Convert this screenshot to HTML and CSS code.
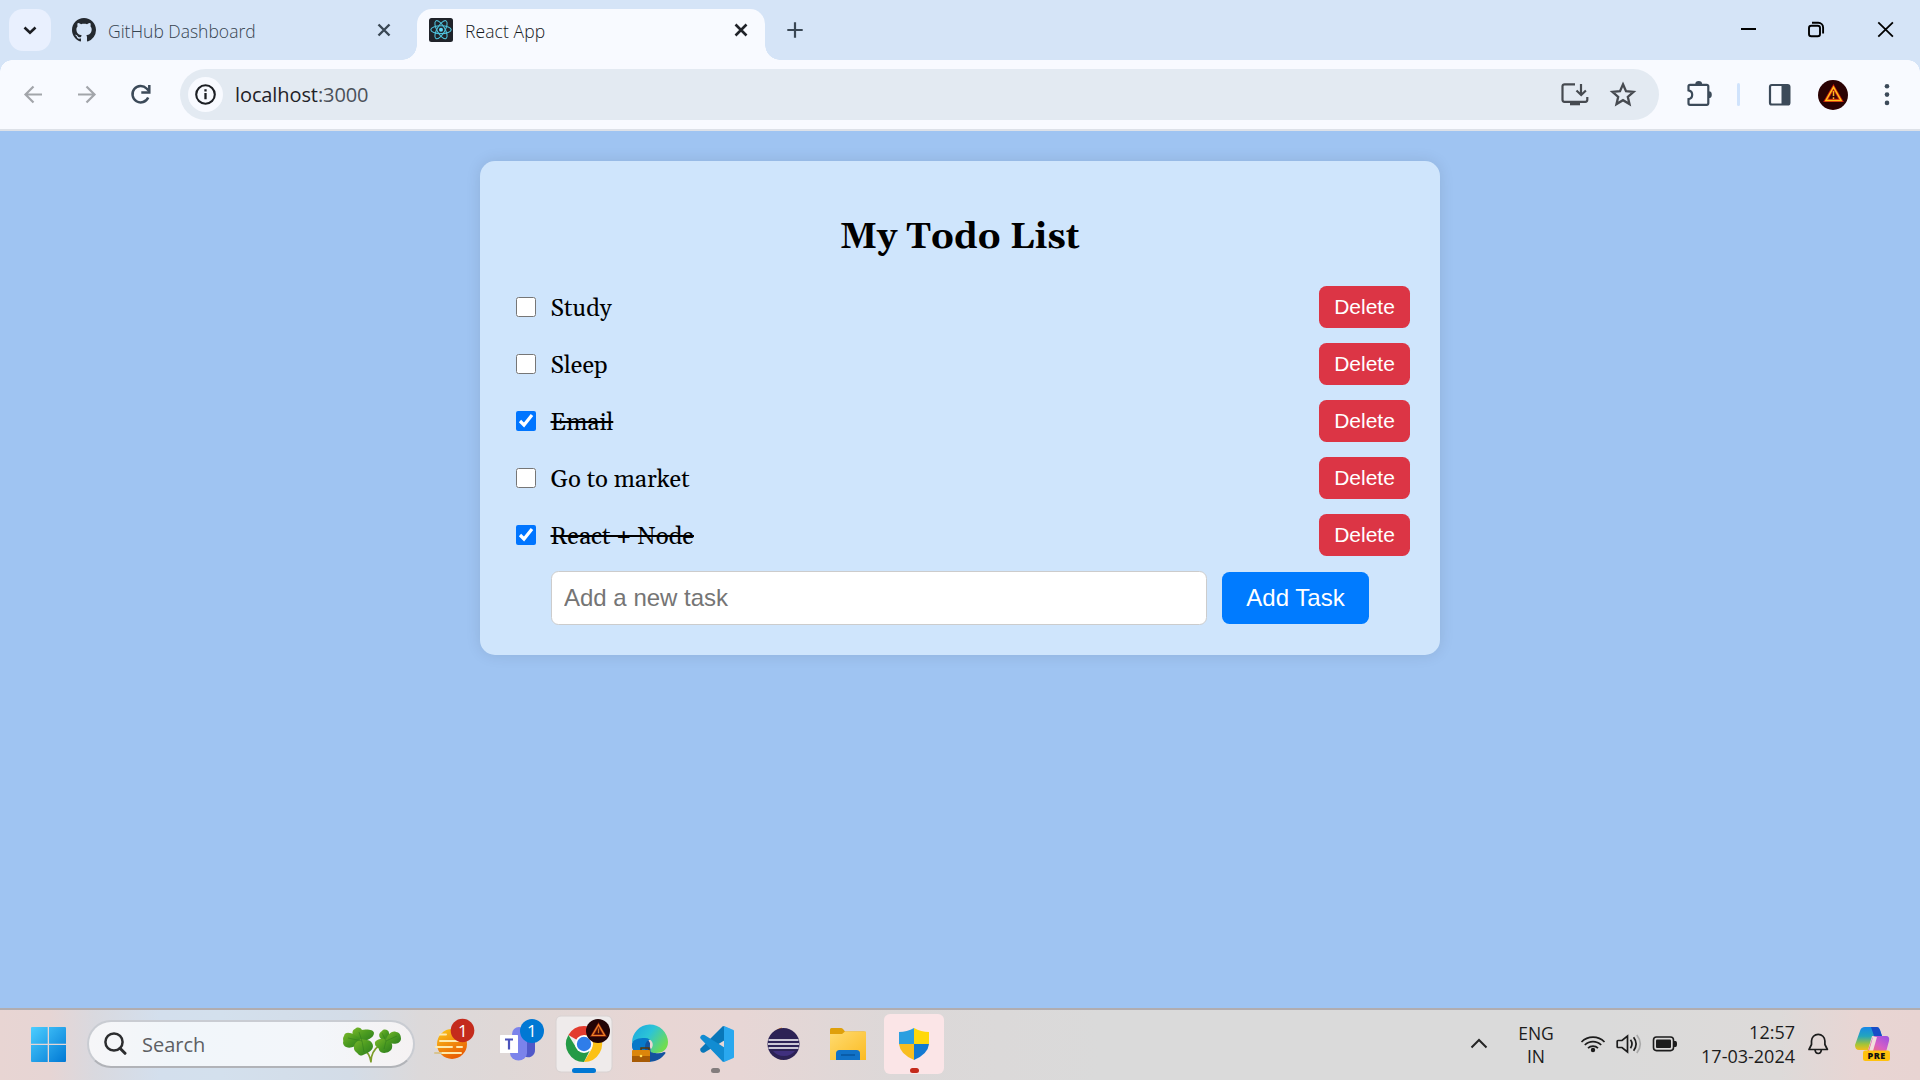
FILE: index.html
```html
<!DOCTYPE html>
<html lang="en">
<head>
<meta charset="utf-8">
<title>React App</title>
<link rel="stylesheet" href="styles.css">
</head>
<body>
<div class="screen">
  <header class="tabstrip">
    <button class="tab-search" aria-label="Search tabs"><svg width="42" height="42" viewBox="0 0 42 42"><path d="M15.500 18.500l5.500 5.300 5.500-5.300" fill="none" stroke="#1b1d22" stroke-width="2.600"/></svg></button>
    <div class="tab tab-idle">
      <svg class="favicon" width="24" height="24" viewBox="0 0 16 16"><path fill="#24292f" d="M8 0C3.58 0 0 3.58 0 8c0 3.54 2.29 6.53 5.47 7.59.4.07.55-.17.55-.38 0-.19-.01-.82-.01-1.49-2.01.37-2.53-.49-2.69-.94-.09-.23-.48-.94-.82-1.13-.28-.15-.68-.52-.01-.53.63-.01 1.08.58 1.23.82.72 1.21 1.87.87 2.33.66.07-.52.28-.87.51-1.07-1.78-.2-3.64-.89-3.64-3.95 0-.87.31-1.59.82-2.15-.08-.2-.36-1.02.08-2.12 0 0 .67-.21 2.2.82.64-.18 1.32-.27 2-.27s1.36.09 2 .27c1.53-1.04 2.2-.82 2.2-.82.44 1.1.16 1.92.08 2.12.51.56.82 1.27.82 2.15 0 3.07-1.87 3.75-3.65 3.95.29.25.54.73.54 1.48 0 1.07-.01 1.93-.01 2.2 0 .21.15.46.55.38A8.01 8.01 0 0 0 16 8c0-4.42-3.58-8-8-8z"/></svg>
      <span class="tab-title title-github">GitHub Dashboard</span>
      <svg class="tab-close" width="24" height="24" viewBox="0 0 24 24"><path d="M6.500 6.500l11 11m0-11l-11 11" stroke="#3a4754" stroke-width="2.400"/></svg>
    </div>
    <div class="tab tab-active">
      <svg class="favicon" width="24" height="24" viewBox="0 0 24 24"><rect width="24" height="24" rx="2.500" fill="#20232a"/><g fill="none" stroke="#4fc3dd" stroke-width="1.100"><ellipse cx="12" cy="11.700" rx="10.200" ry="3.900"/><ellipse cx="12" cy="11.700" rx="10.200" ry="3.900" transform="rotate(60 12 11.700)"/><ellipse cx="12" cy="11.700" rx="10.200" ry="3.900" transform="rotate(120 12 11.700)"/></g><circle cx="12" cy="11.700" r="2" fill="#61dafb"/></svg>
      <span class="tab-title title-react">React App</span>
      <svg class="tab-close" width="24" height="24" viewBox="0 0 24 24"><path d="M6.500 6.500l11 11m0-11l-11 11" stroke="#202329" stroke-width="2.600"/></svg>
    </div>
    <svg class="new-tab" width="42" height="42" viewBox="0 0 42 42"><path d="M21 13.300v15.400M13.300 21h15.400" stroke="#3a4754" stroke-width="2.200"/></svg>
    <div class="window-controls">
      <svg width="69" height="60" viewBox="0 0 69 60"><path d="M28 29h15" stroke="#000" stroke-width="2"/></svg>
      <svg width="69" height="60" viewBox="0 0 69 60"><g fill="none" stroke="#000" stroke-width="1.900"><rect x="27" y="25.800" width="11" height="10.500" rx="2.300"/><path d="M30 22.800h6.300a4.800 4.800 0 0 1 4.800 4.800v6"/></g></svg>
      <svg width="69" height="60" viewBox="0 0 69 60"><path d="M27.300 22.300l14.600 14.400m0-14.400L27.300 36.700" stroke="#000" stroke-width="1.800"/></svg>
    </div>
  </header>

  <nav class="toolbar">
    <svg width="54" height="69" viewBox="0 0 54 69"><path d="M36 34.500H19.500M27.500 26.500l-8 8 8 8" fill="none" stroke="#a2a5aa" stroke-width="2.200"/></svg>
    <svg width="54" height="69" viewBox="0 0 54 69"><path d="M18 34.500h16.500M26.500 26.500l8 8-8 8" fill="none" stroke="#a2a5aa" stroke-width="2.200"/></svg>
    <svg width="54" height="69" viewBox="0 0 54 69"><path d="M34.200 37.500A8.200 8.200 0 1 1 32.600 28.500l2.300 2.500" fill="none" stroke="#3c4a59" stroke-width="2.500"/><path d="M35.300 25v7.400h-8" fill="none" stroke="#3c4a59" stroke-width="2.500"/></svg>
    <div class="omnibox">
      <span class="site-info"><svg width="35" height="35" viewBox="0 0 35 35"><circle cx="17.500" cy="17.500" r="9.300" fill="none" stroke="#1c1f24" stroke-width="2.100"/><path d="M17.500 16v6.200M17.500 12.300v2.200" stroke="#1c1f24" stroke-width="2.300"/></svg></span>
      <span class="url"><span class="host">localhost</span><span class="port">:3000</span></span>
      <svg class="push" width="48" height="51" viewBox="0 0 48 51"><path d="M24 15.300H13.500a2 2 0 0 0-2 2v13.500a2 2 0 0 0 2 2h20.800a2 2 0 0 0 2-2V28M30 15v10M25.500 21.500l4.700 4.500 4.700-4.500" fill="none" stroke="#464a50" stroke-width="2.200"/><path d="M19 33h10v3.300H19z" fill="#464a50"/></svg>
      <svg width="48" height="51" viewBox="0 0 48 51"><path d="M24 15.300l3 6.900 7.500.7-5.700 4.900 1.700 7.300-6.500-3.900-6.500 3.900 1.700-7.300-5.700-4.900 7.500-.7z" fill="none" stroke="#464a50" stroke-width="2.300"/></svg>
    </div>
    <svg width="50" height="69" viewBox="0 0 50 69"><path d="M15 24.800h16.800a1.500 1.500 0 0 1 1.500 1.500v17a1.500 1.500 0 0 1-1.500 1.500H15a1.500 1.500 0 0 1-1.500-1.500v-4.200c2.200-.4 3.700-2.200 3.700-4.400s-1.500-4-3.700-4.400v-4a1.500 1.500 0 0 1 1.500-1.500z" fill="none" stroke="#3c4a59" stroke-width="2.200"/><path d="M20.300 24a3.400 3 0 0 1 6.800 0zM33.800 31.300a3 3.400 0 0 1 0 6.800z" fill="#3c4a59"/></svg>
    <span class="divider"></span>
    <svg width="48" height="69" viewBox="0 0 48 69"><rect x="15" y="25" width="19.400" height="19.500" rx="1.800" fill="none" stroke="#3c4a59" stroke-width="2.200"/><path d="M26.500 25h8v19.500h-8z" fill="#3c4a59"/></svg>
    <svg width="60" height="69" viewBox="0 0 60 69"><circle cx="30" cy="35" r="15" fill="#2a0203"/><path d="M30.500 27.200l7.600 13.200H22.900z" fill="#380505" stroke="#c71b0a" stroke-width="3.200"/><path d="M30.500 27.200l7.600 13.200H22.900z" fill="none" stroke="#ffc51b" stroke-width="1.500"/><path d="M30.500 31v5m0 1.300v1.800" stroke="#ffb020" stroke-width="1.500"/></svg>
    <svg width="48" height="69" viewBox="0 0 48 69"><g fill="#3c4a59"><circle cx="24" cy="26.300" r="2.300"/><circle cx="24" cy="34.600" r="2.300"/><circle cx="24" cy="42.900" r="2.300"/></g></svg>
  </nav>

  <main class="page">
    <section class="card">
      <h2 class="heading">My Todo List</h2>
      <ul class="todos">
        <li class="todo"><input type="checkbox" class="check"><span class="task">Study</span><button class="delete">Delete</button></li>
        <li class="todo"><input type="checkbox" class="check"><span class="task">Sleep</span><button class="delete">Delete</button></li>
        <li class="todo"><input type="checkbox" class="check" checked><span class="task done">Email</span><button class="delete">Delete</button></li>
        <li class="todo"><input type="checkbox" class="check"><span class="task">Go to market</span><button class="delete">Delete</button></li>
        <li class="todo"><input type="checkbox" class="check" checked><span class="task done">React + Node</span><button class="delete">Delete</button></li>
      </ul>
      <div class="add-row">
        <input class="new-task" type="text" placeholder="Add a new task">
        <button class="add">Add Task</button>
      </div>
    </section>
  </main>

  <footer class="taskbar">
    <svg class="start" width="35" height="35" viewBox="0 0 35 35"><defs><linearGradient id="win" x1="0" y1="0" x2="1" y2="1"><stop offset="0" stop-color="#4cceff"/><stop offset="1" stop-color="#0078d4"/></linearGradient></defs><path fill="url(#win)" d="M1 0h15.700v16.700H0V1a1 1 0 0 1 1-1zM18 0h16a1 1 0 0 1 1 1v15.700H18zM0 18h16.700v17H1a1 1 0 0 1-1-1zM18 18h17v16a1 1 0 0 1-1 1H18z"/></svg>
    <div class="search">
      <svg class="magnifier" width="24" height="24" viewBox="0 0 24 24"><circle cx="11" cy="10" r="8.600" fill="none" stroke="#2c2d2f" stroke-width="2.500"/><path d="M17 16.300l5 5" stroke="#2c2d2f" stroke-width="3" stroke-linecap="round"/></svg>
      <span class="search-text">Search</span>
      <svg class="clover" width="60" height="37" viewBox="0 0 60 37"><defs><linearGradient id="leaf" x1="0" y1="0" x2="1" y2="1"><stop offset="0" stop-color="#79b72a"/><stop offset=".5" stop-color="#4a9a20"/><stop offset="1" stop-color="#2c7c1f"/></linearGradient></defs><path d="M20 21q8 5 9 14.500M38 18q-9 6-9 17" fill="none" stroke="#7d9d2a" stroke-width="1.600"/><g fill="url(#leaf)"><path d="M19 15C9 12 9 3 13 2c2-2 5-2 7 1 3-1 12-1 12 3 0 5-8 8-13 9z"/><path d="M20 14C13 6 3 3 2 9c-2 3 0 4-1 7 1 6 10 7 19-2z"/><path d="M19 12c-9 4-8 11-5 13 2 1 3 5 7 3 8-3 12-7 9-12-2-4-8-3-11-4z"/><path d="M45 15c-10-3-9-9-5-11 2-3 7-1 7 2 1 3 0 6-2 9z"/><path d="M44 14c0-5 6-11 10-9 4 0 5 4 5 7-1 6-10 6-15 2z"/><path d="M46 12c-8-1-14 1-13 5 0 3 4 3 4 6 2 5 12 3 13-2 1-4-1-7-4-9z"/></g><path d="M20 14L6 11M20 14L17 5M20 14l2 11M44 14l-4-8M44 14l11-5M44 14l-2 8" fill="none" stroke="#2c761e" stroke-width=".8" opacity=".6"/></svg>
    </div>
    <div class="apps">
      <svg width="66" height="70" viewBox="0 0 66 70"><defs><linearGradient id="sun" x1="0" y1="0" x2=".5" y2="1"><stop offset="0" stop-color="#fbc91a"/><stop offset="1" stop-color="#e95f04"/></linearGradient></defs><circle cx="33" cy="34" r="15" fill="url(#sun)"/><path d="M21 24.500h6M21 31h18M17 37h16M38 37h5M20 43h22" stroke="#fdeaae" stroke-width="2" stroke-linecap="round"/><path d="M16 43h6" stroke="#d8c491" stroke-width="2" stroke-linecap="round"/><circle cx="43.500" cy="20.500" r="11.800" fill="#c42b1c"/><text x="43.800" y="26.500" class="badge-text">1</text></svg>
      <svg width="66" height="70" viewBox="0 0 66 70"><path d="M39 29h11v11a7 7 0 0 1-11 6z" fill="#5059c9"/><circle cx="34" cy="24" r="7" fill="#7b83eb"/><path d="M25 29h17v14a8.500 7.500 0 0 1-17 0z" fill="#7b83eb"/><rect x="15" y="25" width="18" height="18" rx=".5" fill="#fff"/><path d="M20 29.500h8M24 29.500v10" stroke="#4b53bc" stroke-width="2.200"/><circle cx="47" cy="21" r="12" fill="#0078d4"/><text x="46.900" y="27" class="badge-text">1</text></svg>
      <svg width="66" height="70" viewBox="0 0 66 70"><rect x="5" y="6" width="56" height="56" rx="5" fill="#efebeb" stroke="#d8d2d2"/><path d="M33 34L17.400 25A18 18 0 0 1 48.600 25H33z" fill="#e33b2e"/><path d="M33 34h9L33 52A18 18 0 0 1 17.400 25l8 13z" fill="#249a46"/><path d="M33 25h15.600A18 18 0 0 1 33 52l8-13.500z" fill="#fbc116"/><circle cx="33" cy="34" r="9" fill="#fff"/><circle cx="33" cy="34" r="7.200" fill="#2f7de9"/><circle cx="47" cy="21" r="12" fill="#230406"/><path d="M47.500 14.800l6.200 10.700H41.200z" fill="#410909" stroke="#8f240c" stroke-width="2.600"/><path d="M47.500 14.800l6.200 10.700H41.200z" fill="none" stroke="#ed8429" stroke-width="1.200"/><path d="M47.500 18.500v4.700" stroke="#cb6c1c" stroke-width="1.300"/><rect x="21" y="58" width="24" height="5" rx="2.500" fill="#0078d4"/></svg>
      <svg width="66" height="70" viewBox="0 0 66 70"><defs><linearGradient id="edge" x1="0" y1="0" x2="1" y2=".6"><stop offset="0" stop-color="#1aa5e0"/><stop offset=".5" stop-color="#2cc4d7"/><stop offset="1" stop-color="#70dc51"/></linearGradient></defs><path d="M15 34a18 18 0 0 0 32 11q3-3 0-3-4 2-9 1-6-2-5-10l-4-7z" fill="#14539f"/><path d="M15 34c1-8 12-12 20-5q-7 1-7 8 0 9 6 15C23 53 15 44 15 34z" fill="#0879c9"/><path d="M15 33a18 18 0 0 1 36-1c0 8-6 11-12 11-4 0-7-1-5-4 4-4 1-11-6-11-6 0-11 1-13 5z" fill="url(#edge)"/><path d="M24 40v-2h8v2" fill="none" stroke="#5a3603" stroke-width="1.500"/><rect x="15" y="40" width="18" height="12" rx="1" fill="#dc860b"/><path d="M15 46h18v6H15z" fill="#a85b05"/><circle cx="24" cy="46" r="1.300" fill="#ffdb55"/></svg>
      <svg width="66" height="70" viewBox="0 0 66 70"><path d="M17.500 38.500L40 16l7 3v8L21.500 42.500q-2 1-3.500-.8t-.5-3.200z" fill="#0877b9"/><path d="M17.500 28.500L40 52l7-3v-8L21.500 25q-2-1-3.500.8t-.5 2.700z" fill="#118cd2"/><path d="M41 16l9.500 4q.5.300.5 1v26q0 .7-.5 1L41 52z" fill="#29a8ef"/><rect x="28" y="58" width="9" height="5" rx="2.500" fill="#837d7d"/></svg>
      <svg width="66" height="70" viewBox="0 0 66 70"><path d="M33 17.500a16.700 16.700 0 0 0 0 32.500z" fill="#f7941e"/><circle cx="34.500" cy="34" r="16" fill="#2c2255"/><path d="M24 41h22q-4 5-11 5t-11-5z" fill="#40307e"/><path d="M19.500 30h30M19 34h31M19.500 38h30" stroke="#fff" stroke-width="1.600"/></svg>
      <svg width="66" height="70" viewBox="0 0 66 70"><defs><linearGradient id="folder" x1="0" y1="0" x2="1" y2="1"><stop offset="0" stop-color="#ffdb70"/><stop offset="1" stop-color="#fbbb23"/></linearGradient></defs><path d="M15 19.500q0-1.500 1.500-1.500H26q1 0 2 1l2 2.500H49q2 0 2 1.500v8H15z" fill="#dfa00b"/><path d="M15 24h12l3-2.500h21V50H15z" fill="url(#folder)"/><path d="M21 50v-6.500q0-3.500 3.500-3.500h17q3.500 0 3.500 3.500V50z" fill="#1172c8"/><path d="M26 45h14" stroke="#07569f" stroke-width="1.500"/></svg>
      <svg width="66" height="70" viewBox="0 0 66 70"><rect x="3" y="4" width="60" height="60" rx="6" fill="#fbe5e7"/><path d="M33 18q-7 4-15 4v12h15z" fill="#2b9fe0"/><path d="M33 18q7 4 15 4v12H33z" fill="#ffd80b"/><path d="M18 34q1 10 15 16V34z" fill="#f8bd20"/><path d="M48 34q-1 10-15 16V34z" fill="#1379d2"/><rect x="29" y="58" width="9" height="5" rx="2.500" fill="#c42b1c"/></svg>
    </div>
    <div class="tray">
      <svg width="44" height="70" viewBox="0 0 44 70"><path d="M14.500 37.500l7.500-7.500 7.500 7.500" fill="none" stroke="#242424" stroke-width="2"/></svg>
      <div class="language"><span>ENG</span><span>IN</span></div>
      <svg width="36" height="70" viewBox="0 0 36 70"><g fill="none" stroke="#1c1c1c" stroke-width="1.700"><path d="M6.500 32a16.200 16.200 0 0 1 23 0M9.800 35a11.600 11.600 0 0 1 16.400 0M13 38.200a7 7 0 0 1 10 0"/></g><circle cx="18" cy="40" r="2.200" fill="#1c1c1c"/></svg>
      <svg width="36" height="70" viewBox="0 0 36 70"><g fill="none" stroke="#1c1c1c" stroke-width="1.700"><path d="M7 30.500h4l5.500-4.500v16L11 37.500H7q-.8 0-.8-.8v-5.400q0-.8.800-.8z"/><path d="M19.500 29.800q3 4.200 0 8.400M22.600 27.300q5 6.700 0 13.400"/><path d="M25.800 25q7 9 0 18" stroke="#aaa"/></g></svg>
      <svg width="36" height="70" viewBox="0 0 36 70"><rect x="6.500" y="27" width="20" height="13.600" rx="3" fill="none" stroke="#1c1c1c" stroke-width="1.600"/><rect x="9" y="29.600" width="15" height="8.500" rx="1" fill="#1c1c1c"/><path d="M27 31h1.500q1.500 0 1.500 3t-1.500 3H27z" fill="#1c1c1c"/></svg>
      <div class="clock"><span class="time">12:57</span><span class="date">17-03-2024</span></div>
      <svg class="bell" width="36" height="70" viewBox="0 0 36 70"><path d="M9 39.500l2.500-5V31a6.700 6.700 0 0 1 13.400 0v3.500l2.500 5zM15 40q.5 3.500 3.200 3.500t3.200-3.500" fill="none" stroke="#1c1c1c" stroke-width="1.700" stroke-linejoin="round"/></svg>
      <svg class="copilot" width="36" height="36" viewBox="0 0 36 36"><defs><linearGradient id="coa" x1="0" y1="0" x2="0" y2="1"><stop offset="0" stop-color="#1787e8"/><stop offset=".4" stop-color="#23a5bd"/><stop offset=".75" stop-color="#a3c437"/><stop offset="1" stop-color="#f2bd1b"/></linearGradient><linearGradient id="cob" x1="1" y1="0" x2="0" y2="1"><stop offset="0" stop-color="#9650e5"/><stop offset=".5" stop-color="#d75fc5"/><stop offset="1" stop-color="#ff784f"/></linearGradient></defs><path d="M10 0h12q2 0 3 3l2 6H17l-4 14H4q-4 0-4-5L5 4q1-4 5-4z" fill="url(#coa)"/><path d="M16 0h6q2 0 3 3l2 6h-8z" fill="#174cc7"/><path d="M22 9h9q4 0 3 5l-3 11H9q4 0 5-4l3-9q1-3 5-3z" fill="url(#cob)"/><path d="M18 10h4l-4 14h-4z" fill="#f1dedc"/><rect x="8" y="23.500" width="27" height="10.500" rx="2.200" fill="#ffc20e"/><text x="21.700" y="32.200" class="pre">PRE</text></svg>
    </div>
  </footer>
</div>
</body>
</html>
```
FILE: styles.css
```css
* { box-sizing: border-box; }
body { margin: 0; font-family: "Open Sans", "Noto Sans", sans-serif; background: #9fc4f2; }
svg { display: block; flex: none; }
button { border: 0; padding: 0; font-family: inherit; }
.screen { width: 1920px; height: 1080px; display: flex; flex-direction: column; overflow: hidden; background: #9fc4f2; }

/* Tab strip */
.tabstrip { height: 60px; flex: none; display: flex; align-items: flex-start; background: #d5e4f7; }
.tab-search { width: 42px; height: 42px; margin: 9px 0 0 9px; border-radius: 14px; background: #e9f0fe; }
.tab { height: 51px; margin-top: 9px; display: flex; align-items: flex-start; padding-top: 9px; }
.tab-idle { width: 366px; padding-left: 21px; padding-right: 21px; color: #36434f; }
.tab-active { position: relative; width: 348px; padding-left: 12px; padding-right: 12px; border-radius: 15px 15px 0 0; background: #f8faff; color: #15181c; }
.tab-active::before, .tab-active::after { content: ""; position: absolute; bottom: 0; width: 15px; height: 15px; }
.tab-active::before { left: -15px; background: radial-gradient(circle at 0 0, transparent 14.5px, #f8faff 15px); }
.tab-active::after { right: -15px; background: radial-gradient(circle at 100% 0, transparent 14.5px, #f8faff 15px); }
.tab-title { margin-left: 12px; font-size: 17.5px; font-weight: 340; line-height: 24px; padding-top: 1px; white-space: nowrap; }
.title-react { letter-spacing: 0.1px; }
.tab-close { margin-left: auto; }
.new-tab { margin: 9px 0 0 9px; }
.window-controls { margin-left: auto; display: flex; }

/* Toolbar */
.toolbar { height: 71px; flex: none; display: flex; align-items: flex-start; padding: 0 9px 0 6px; background: #f8faff; border-bottom: 2px solid #dde1e8; position: relative; }
.toolbar::before, .toolbar::after { content: ""; position: absolute; top: 0; width: 12px; height: 12px; }
.toolbar::before { left: 0; background: radial-gradient(circle at 100% 100%, transparent 11.5px, #d5e4f7 12px); }
.toolbar::after { right: 0; background: radial-gradient(circle at 0 100%, transparent 11.5px, #d5e4f7 12px); }
.omnibox { width: 1479px; height: 51px; margin: 9px 16px 0 12px; padding: 0 12px 0 8px; display: flex; align-items: center; border-radius: 26px; background: #e3eaf2; }
.site-info { border-radius: 50%; background: #f8faff; }
.url { margin-left: 12px; font-size: 20px; font-weight: 370; letter-spacing: -0.1px; line-height: 51px; color: #1f2227; }
.port { color: #4b5159; }
.push { margin-left: auto; }
.divider { width: 3px; height: 23px; margin: 23px 15px 0 12px; border-radius: 2px; background: #d0e3fc; }

/* Todo page */
.page { flex: 1; min-height: 0; padding-top: 30px; display: flex; justify-content: center; align-items: flex-start; background: #9fc4f2; font-family: Gelasio, Georgia, "Liberation Serif", serif; }
.card { width: 960px; height: 494px; padding: 30px; border-radius: 15px; background: #cfe5fc; box-shadow: 0 0 15px rgba(0, 0, 0, 0.1); }
.heading { margin: 26px 0 27px; height: 42px; line-height: 42px; font-size: 36px; font-weight: 700; text-align: center; color: #000; }
.todos { list-style: none; margin: 0; padding: 0 0 0 6px; }
.todo { height: 42px; margin-bottom: 15px; display: flex; align-items: center; }
.check { width: 19.5px; height: 19.5px; margin: 0 15px 0 0; flex: none; }
.task { font-size: 24px; line-height: 30px; padding-top: 4px; color: #000; }
.done { text-decoration: line-through; }
.delete { width: 91px; height: 42px; margin-left: auto; border-radius: 7.5px; background: #dc3545; color: #fff; font: 21px "Liberation Sans", Arial, sans-serif; }
.add-row { display: flex; align-items: center; gap: 15px; padding-left: 41px; }
.new-task { width: 656px; height: 54px; padding: 0 12px; border: 1px solid #ccc; border-radius: 7.5px; background: #fff; font: 24px "Liberation Sans", Arial, sans-serif; }
.new-task::placeholder { color: #757575; }
.add { width: 147px; height: 52px; border-radius: 7.5px; background: #007bff; color: #fff; font: 24px "Liberation Sans", Arial, sans-serif; }

/* Taskbar */
.taskbar { height: 72px; flex: none; display: flex; align-items: center; border-top: 2px solid #b1adb0; padding-left: 31px; padding-right: 29px;
  background: linear-gradient(90deg, #e8d5d3 0, #e6d5d4 50px, #d9d9df 95px, #d3dfed 160px, #d3e0ed 220px, #d3dce7 350px, #dcd9da 420px, #dfd8d7 500px, #e8d6d4 660px, #e7d6d5 740px, #dcd8d8 900px, #dadada 1100px, #dadada 1600px, #dddad9 1780px, #e8d5d3 1860px, #e8d4d2 1920px); }
.start { margin-bottom: 2px; }
.search { width: 328px; height: 48px; margin: 0 4px 2px 21px; padding: 0 11px 0 14px; display: flex; align-items: center; border: 2px solid #c9ccd2; border-bottom-color: #b1b3b8; border-radius: 24px; background: linear-gradient(90deg, #f6f6f8, #f1f6fa 25%, #f3f6fa 70%, #f5f2f3); }
.search-text { margin-left: 15px; font-size: 20px; color: #5d5f63; }
.clover { margin: 3px 0 0 auto; }
.apps { display: flex; }
.badge-text { font: 17px "Open Sans", sans-serif; fill: #fff; text-anchor: middle; }
.tray { margin-left: auto; display: flex; align-items: center; color: #1c1c1c; font-size: 17.5px; line-height: 23px; }
.language { width: 70px; display: flex; flex-direction: column; align-items: center; margin-right: 4px; padding-bottom: 1px; }
.clock { width: 112px; display: flex; flex-direction: column; align-items: flex-end; padding-bottom: 3px; line-height: 24px; font-size: 18px; white-space: nowrap; }
.bell { margin-left: 5px; margin-right: 19px; }
.pre { font: 800 9px "Open Sans", sans-serif; letter-spacing: 0.5px; fill: #111; text-anchor: middle; }
```
